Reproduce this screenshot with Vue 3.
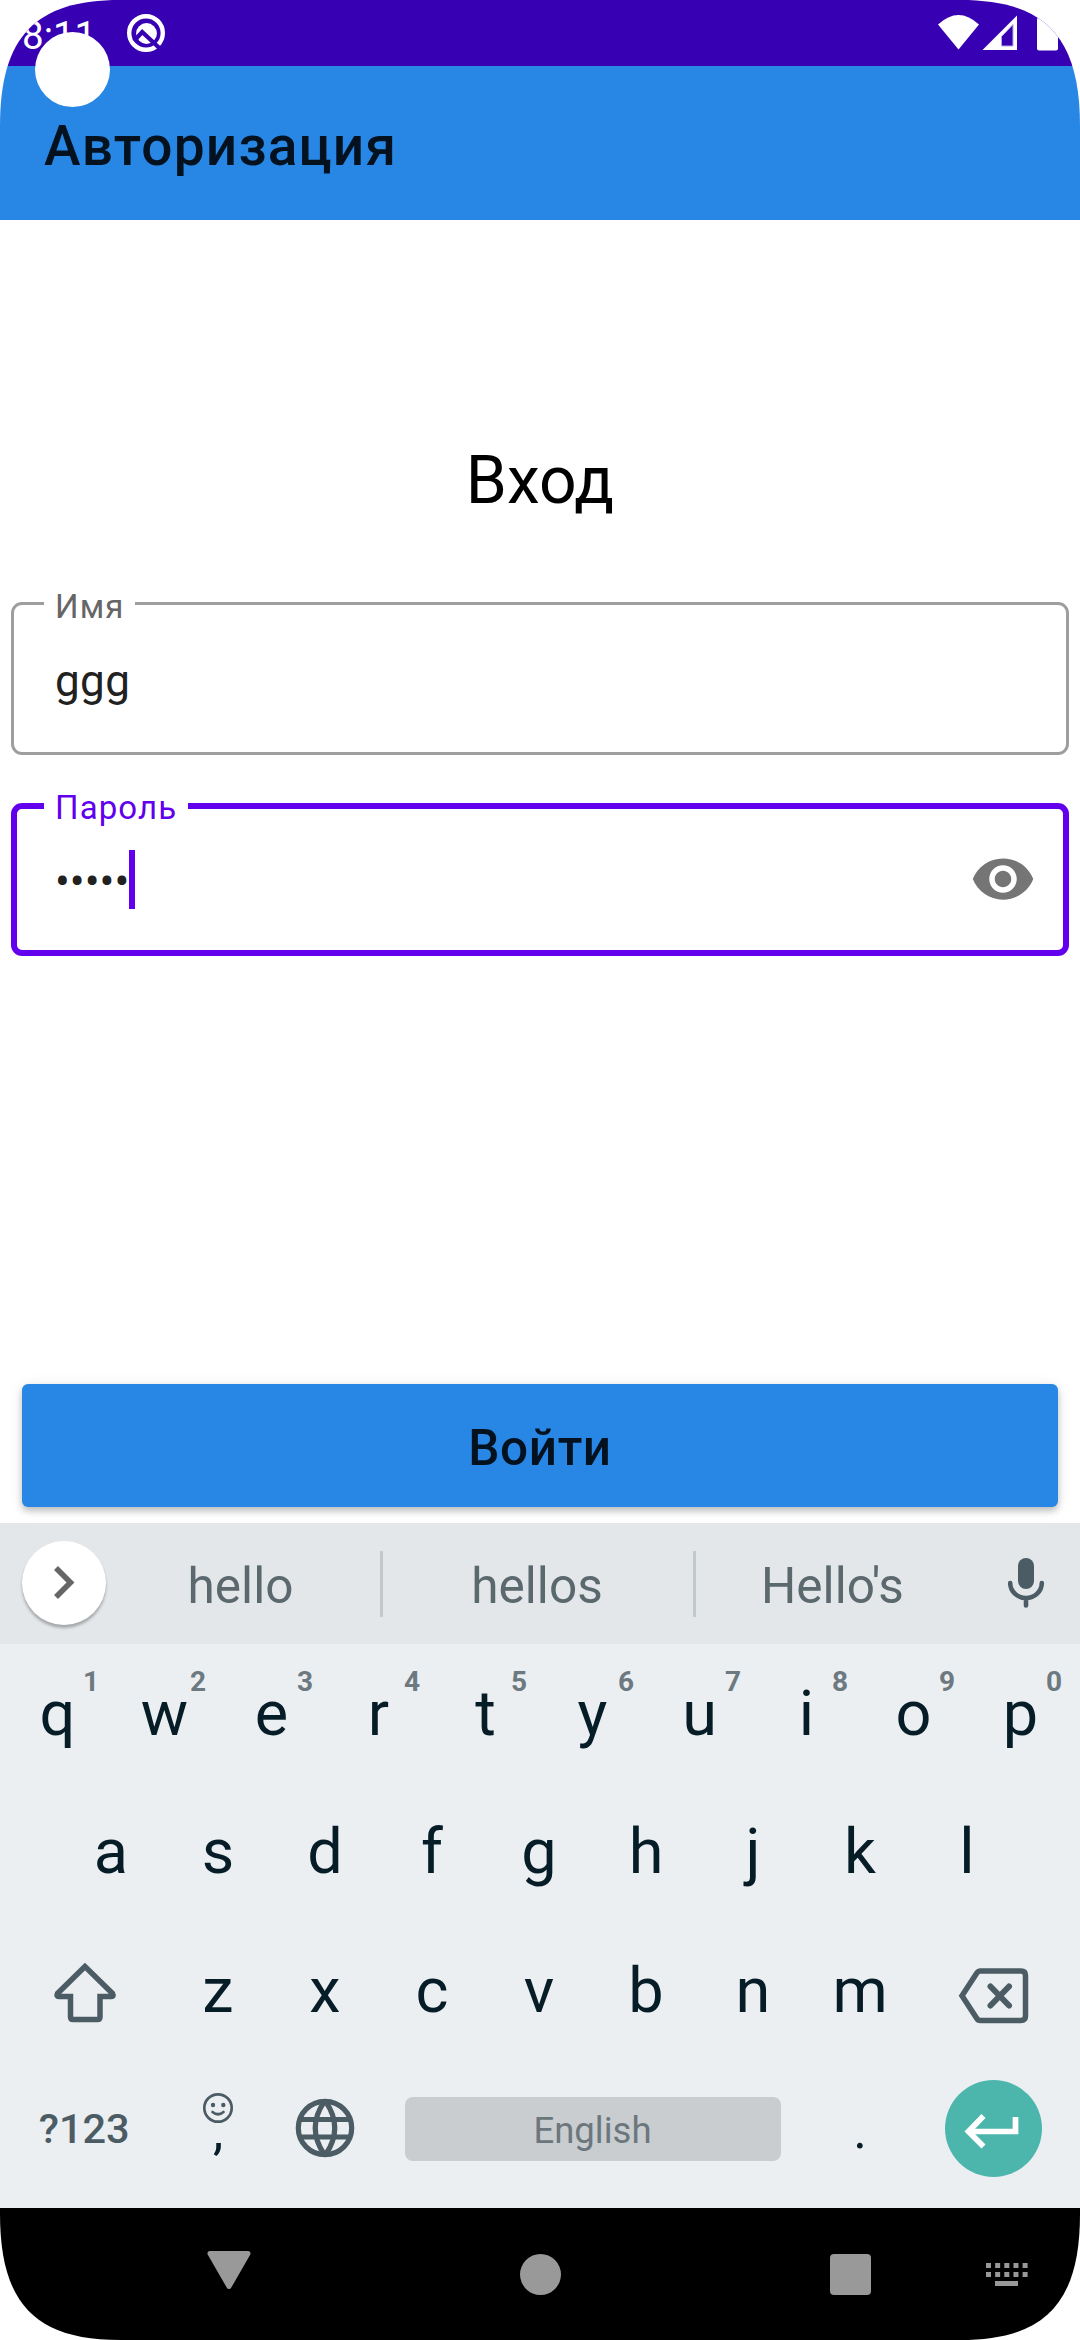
<script setup>
const topRow = [...'qwertyuiop'].map((letter, i) => ({ letter, hint: (i + 1) % 10 }))
const middleRow = [...'asdfghjkl']
const bottomRow = [...'zxcvbnm']
const dotColumns = [0, 1, 2, 3, 4]
</script>

<template>
  <div class="screen">
    <header class="status-bar">
      <span class="clock">8:11</span>
      <svg class="q-icon" width="40" height="40" viewBox="0 0 40 40">
        <circle cx="20" cy="20" r="16.8" fill="none" stroke="#fff" stroke-width="4.4" />
        <circle cx="20.5" cy="20.5" r="10.4" fill="#fff" />
        <path d="M8 28 16.2 19 36 37.5" fill="none" stroke="#3700b3" stroke-width="4.2" />
      </svg>
      <svg class="status-icons" width="124" height="40" viewBox="0 0 124 40">
        <path d="M2 11.5Q22.500-7.500 43 11.500L22.500 36.500Z" fill="#fff" />
        <path d="M46.500 37 81 2.500V37Z" fill="#fff" />
        <path d="M65.500 23.500 77 11.500V33H65.500Z" fill="#3700b3" stroke="#b9a5e4" stroke-width="1" />
        <rect x="101" y="4.500" width="21" height="33" rx="2" fill="#fff" />
      </svg>
      <div class="camera"></div>
    </header>

    <div class="app-bar">Авторизация</div>

    <main class="content">
      <h1 class="heading">Вход</h1>
      <div class="field">
        <label class="label">Имя</label>
        <span class="value">ggg</span>
      </div>
      <div class="field focused">
        <label class="label">Пароль</label>
        <span class="value">•••••</span>
        <i class="caret"></i>
        <svg class="eye" width="66" height="66" viewBox="0 0 24 24" fill="#757575">
          <path d="M12 4.500C7 4.500 2.730 7.610 1 12c1.730 4.390 6 7.500 11 7.500s9.270-3.110 11-7.500c-1.730-4.390-6-7.500-11-7.500zM12 17c-2.760 0-5-2.240-5-5s2.240-5 5-5 5 2.240 5 5-2.240 5-5 5zm0-8c-1.660 0-3 1.340-3 3s1.340 3 3 3 3-1.340 3-3-1.340-3-3-3z" />
        </svg>
      </div>
      <button class="submit">Войти</button>
    </main>

    <section class="keyboard">
      <div class="suggestions">
        <div class="expand">
          <svg width="84" height="84" viewBox="0 0 84 84">
            <path d="M34 27 48.500 41.500 34 56" fill="none" stroke="#666" stroke-width="5.600" />
          </svg>
        </div>
        <span class="word">hello</span>
        <i class="divider"></i>
        <span class="word">hellos</span>
        <i class="divider"></i>
        <span class="word">Hello's</span>
        <svg class="mic" width="40" height="54" viewBox="0 0 40 54">
          <rect x="12" y="2" width="16" height="31" rx="8" fill="#4b5c64" />
          <path d="M4.200 27a15.800 15 0 0 0 31.600 0M20 42v7.500" fill="none" stroke="#4b5c64" stroke-width="4.600" stroke-linecap="round" />
        </svg>
      </div>

      <div class="keys">
        <div class="row">
          <div v-for="key in topRow" :key="key.letter" class="key">
            {{ key.letter }}<sup class="hint">{{ key.hint }}</sup>
          </div>
        </div>
        <div class="row middle">
          <div v-for="letter in middleRow" :key="letter" class="key">{{ letter }}</div>
        </div>
        <div class="row">
          <div class="key wide">
            <svg class="shift" width="64" height="64" viewBox="0 0 64 64">
              <path d="M32 6.500 4.500 33.500Q3 36.500 6 36.500H17.500V57Q17.500 59.500 20 59.500H44.500Q47 59.500 47 57V36.500H58.500Q61 36.500 59.500 33.500Z" fill="none" stroke="#4b5c64" stroke-width="5.500" />
            </svg>
          </div>
          <div v-for="letter in bottomRow" :key="letter" class="key">{{ letter }}</div>
          <div class="key wide">
            <svg class="backspace" width="72" height="60" viewBox="0 0 72 60">
              <path d="M22.500 5H63Q67.500 5 67.500 9.500V50Q67.500 54.500 63 54.500H22.500Q20 54.500 18.500 52L4 29.700 18.500 7.500Q20 5 22.500 5Z" fill="none" stroke="#4b5c64" stroke-width="5.500" />
              <path d="M32.500 20.500 51 39.500M51 20.500 32.500 39.500" stroke="#4b5c64" stroke-width="6" stroke-linecap="round" />
            </svg>
          </div>
        </div>
        <div class="row">
          <div class="key wide symbols">?123</div>
          <div class="key comma">
            <svg width="32" height="32" viewBox="0 0 32 32">
              <circle cx="16" cy="16" r="13.700" fill="none" stroke="#4b5c64" stroke-width="2.700" />
              <circle cx="11" cy="13" r="2.200" fill="#4b5c64" />
              <circle cx="21.300" cy="13" r="2.200" fill="#4b5c64" />
              <path d="M10.500 20Q16 24.500 21.500 20" fill="none" stroke="#4b5c64" stroke-width="2.700" stroke-linecap="round" />
            </svg>
            <span>,</span>
          </div>
          <div class="key globe">
            <svg width="60" height="60" viewBox="0 0 60 60" fill="none" stroke="#4b5c64" stroke-width="5.200">
              <circle cx="30" cy="30" r="26.700" />
              <path d="M4.500 21.500H55.500M4.500 39H55.500" />
              <path d="M29 4Q11.500 30 29 56M31 4Q48.500 30 31 56" />
            </svg>
          </div>
          <div class="key space"><span>English</span></div>
          <div class="key period">.</div>
          <div class="key wide">
            <div class="enter">
              <svg width="98" height="98" viewBox="0 0 98 98" fill="none" stroke="#fff" stroke-width="5.700">
                <path d="M70.500 37V51.500H24" />
                <path d="M38.500 36 23.500 51.500 38.500 66.500" />
              </svg>
            </div>
          </div>
        </div>
      </div>
    </section>

    <nav class="nav-bar">
      <svg width="46" height="42" viewBox="0 0 46 42">
        <path d="M4 3.500H42L23 36.500Z" fill="#999" stroke="#999" stroke-width="5" stroke-linejoin="round" />
      </svg>
      <i class="home"></i>
      <i class="recent"></i>
      <svg class="ime" width="42" height="24" viewBox="0 0 42 24" fill="#999">
        <template v-for="n in dotColumns" :key="n">
          <rect :x="n * 9.150" y="0" width="5" height="5" />
          <rect :x="n * 9.150" y="9" width="5" height="5" />
        </template>
        <rect x="9" y="18" width="23" height="5" />
      </svg>
    </nav>
  </div>
</template>

<style>
body {
  margin: 0;
  background: #fff;
}
</style>

<style scoped>
.screen {
  width: 1080px;
  height: 2340px;
  display: flex;
  flex-direction: column;
  overflow: hidden;
  background: #fff;
  font-family: Roboto, "Noto Sans", sans-serif;
  clip-path: path("M0 126C0 36 36 0 120 0H960C1044 0 1080 36 1080 126V2214C1080 2304 1044 2340 960 2340H120C36 2340 0 2304 0 2214Z");
}

.status-bar {
  position: relative;
  display: flex;
  align-items: center;
  height: 66px;
  flex: none;
  box-sizing: border-box;
  padding: 0 20px 0 22px;
  background: #3700b3;
  color: #fff;
}
.clock {
  width: 104px;
  padding-top: 4px;
  font-size: 38.5px;
}
.status-icons {
  margin-left: auto;
}
.camera {
  position: absolute;
  left: 35px;
  top: 32px;
  width: 75px;
  height: 75px;
  border-radius: 50%;
  background: #fff;
}

.app-bar {
  flex: none;
  box-sizing: border-box;
  height: 154px;
  padding: 6px 44px 0;
  background: #2887e4;
  color: #04111e;
  font-size: 55px;
  font-weight: 500;
  line-height: 148px;
  letter-spacing: 1.2px;
}

.content {
  display: flex;
  flex-direction: column;
  flex: 1;
  padding: 0 11px;
}
.heading {
  margin: 221px 0 81px;
  font-size: 66px;
  font-weight: 400;
  line-height: 80px;
  text-align: center;
  color: #000;
}
.field {
  position: relative;
  display: flex;
  align-items: center;
  box-sizing: border-box;
  height: 153px;
  padding: 0 30px 0 41px;
  border: 3px solid #9e9e9e;
  border-radius: 11px;
}
.label {
  position: absolute;
  left: 30px;
  top: -18px;
  padding: 0 11px;
  background: #fff;
  color: #666;
  font-size: 33px;
  line-height: 40px;
  letter-spacing: 1.1px;
}
.value {
  padding-top: 4px;
  font-size: 44px;
  line-height: 52px;
  letter-spacing: 0.4px;
  color: #212121;
}
.focused {
  margin-top: 48px;
  padding: 0 27px 0 38px;
  border: 6px solid #6200ee;
}
.focused .label {
  left: 27px;
  top: -21px;
  color: #6200ee;
}
.focused .value {
  letter-spacing: 0;
}
.caret {
  width: 6px;
  height: 59px;
  background: #6200ee;
}
.eye {
  margin: 0 0 1px auto;
}
.submit {
  height: 123px;
  margin: 428px 11px 0;
  padding: 6px 0 0;
  border: 0;
  border-radius: 6px;
  background: #2887e4;
  color: #04111e;
  font: 500 49.5px/117px Roboto, "Noto Sans", sans-serif;
  letter-spacing: 0.6px;
  box-shadow: 0 4px 6px rgba(0, 0, 0, 0.2), 0 2px 14px rgba(0, 0, 0, 0.1);
}

.keyboard {
  position: relative;
  flex: none;
  height: 685px;
  background: #ebeff2;
}
.suggestions {
  display: grid;
  grid-template-columns: 103px 277px 3px 310px 3px 275px 109px;
  align-items: center;
  height: 121px;
  background: #e3e7ea;
}
.expand {
  justify-self: end;
  width: 84px;
  height: 84px;
  margin: 0 -3px 1px 0;
  border-radius: 50%;
  background: #fff;
  box-shadow: 0 3px 3px rgba(0, 0, 0, 0.28);
}
.word {
  padding: 4px 2px 0 0;
  font-size: 49.5px;
  text-align: center;
  color: #5b696f;
}
.divider {
  height: 66px;
  background: #c3c8cb;
}
.mic {
  justify-self: center;
  margin-bottom: 1px;
}

.keys {
  padding: 5px 6px 0 4px;
}
.row {
  display: flex;
  justify-content: center;
  height: 138px;
}
.middle {
  height: 139px;
}
.key {
  position: relative;
  width: 107px;
  flex: none;
  font-size: 63px;
  line-height: 129px;
  text-align: center;
  color: #061d27;
}
.hint {
  position: absolute;
  left: 77px;
  top: 16px;
  width: 20px;
  font-size: 28px;
  font-weight: 700;
  line-height: 34px;
  color: #6d7980;
}
.wide {
  width: 160.5px;
  display: flex;
  justify-content: center;
}
.shift {
  margin: 34px 0 0 2px;
}
.backspace {
  margin-top: 40px;
}
.symbols {
  font-size: 41.5px;
  font-weight: 500;
  color: #4b5c64;
}
.comma {
  display: flex;
  flex-direction: column;
  align-items: center;
}
.comma svg {
  margin-top: 28px;
}
.comma span {
  font-size: 52px;
  line-height: 60px;
  margin-top: -22px;
}
.globe svg {
  display: block;
  margin: 34px auto 0;
}
.space {
  width: 428px;
}
.space span {
  display: block;
  height: 64px;
  margin: 33px 26px 0;
  border-radius: 8px;
  background: #c9cdd0;
  color: #6b777d;
  font-size: 36.5px;
  line-height: 67px;
}
.period {
  font-size: 52px;
  line-height: 133px;
}
.enter {
  width: 97px;
  height: 97px;
  margin-top: 16px;
  border-radius: 50%;
  background: #4db6ac;
}
.enter svg {
  display: block;
}

.nav-bar {
  display: flex;
  align-items: flex-start;
  flex: none;
  box-sizing: border-box;
  height: 132px;
  padding: 42px 0 0 206px;
  background: #000;
}
.home {
  width: 41px;
  height: 41px;
  margin: 4px 0 0 268px;
  border-radius: 50%;
  background: #999;
}
.recent {
  width: 41px;
  height: 41px;
  margin: 4px 0 0 269px;
  border-radius: 4px;
  background: #999;
}
.ime {
  margin: 13px 0 0 115px;
}
</style>
